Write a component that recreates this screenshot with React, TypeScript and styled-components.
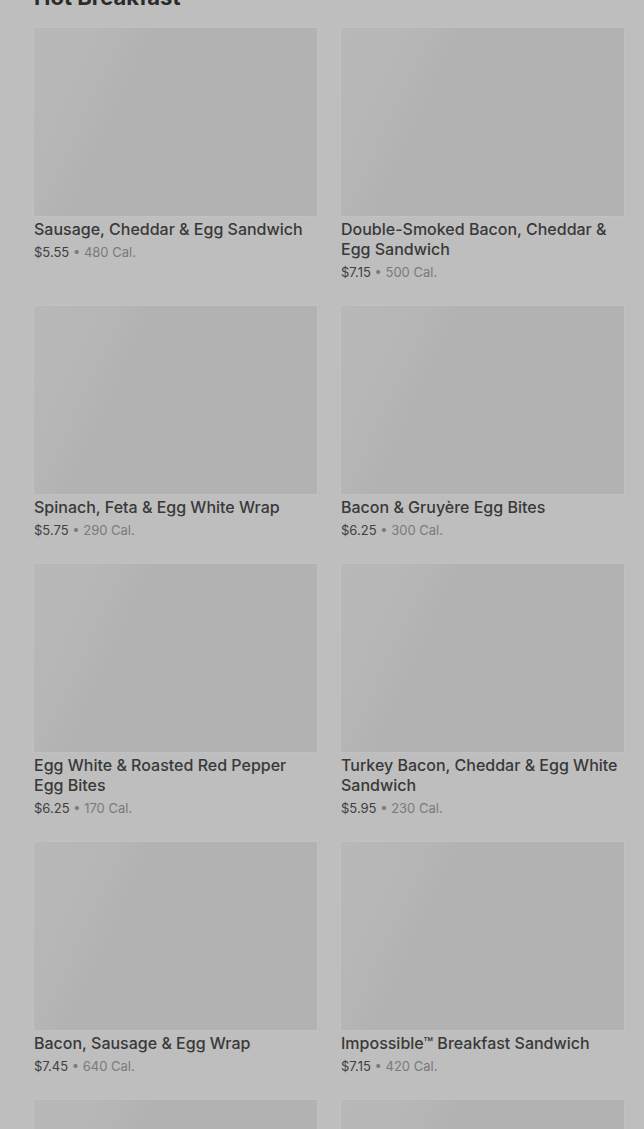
import React from 'react';
import styled, { createGlobalStyle } from 'styled-components';

const GlobalStyle = createGlobalStyle`
  html, body {
    margin: 0;
    padding: 0;
    background: #bebebe;
    font-family: Inter, "Noto Sans", "Liberation Sans", sans-serif;
    overflow: hidden;
  }
`;

const StyledMenu = styled.main`
  padding: 0 20px 0 34px;
  margin-top: -23px;
`;

const Heading = styled.h2`
  margin: 6px 0 17px;
  font-size: 22px;
  line-height: 28px;
  font-weight: 700;
  color: #2b2b2b;
`;

const Grid = styled.div`
  display: grid;
  grid-template-columns: 283px 283px;
  column-gap: 24px;
  row-gap: 25px;
`;

const Card = styled.div`
  display: flex;
  flex-direction: column;
`;

const Thumb = styled.div`
  height: 188px;
  background: linear-gradient(
    115deg,
    #b8b8b8 0%,
    #b6b6b6 22%,
    #b2b2b2 32%,
    #b2b2b2 100%
  );
  box-shadow: 0 0 0 1px #c1c1c1;
`;

const Title = styled.div`
  margin-top: 3px;
  font-size: 16px;
  line-height: 20px;
  font-weight: 500;
  color: #393939;
`;

const Meta = styled.div`
  margin-top: 4px;
  font-size: 13px;
  line-height: 18px;
  color: #404040;
  span {
    color: #7a7a7a;
  }
`;

interface IItem {
  name: string;
  price: string;
  cal: number;
}

const items: IItem[] = [
  { name: 'Sausage, Cheddar & Egg Sandwich', price: '$5.55', cal: 480 },
  { name: 'Double-Smoked Bacon, Cheddar & Egg Sandwich', price: '$7.15', cal: 500 },
  { name: 'Spinach, Feta & Egg White Wrap', price: '$5.75', cal: 290 },
  { name: 'Bacon & Gruyère Egg Bites', price: '$6.25', cal: 300 },
  { name: 'Egg White & Roasted Red Pepper Egg Bites', price: '$6.25', cal: 170 },
  { name: 'Turkey Bacon, Cheddar & Egg White Sandwich', price: '$5.95', cal: 230 },
  { name: 'Bacon, Sausage & Egg Wrap', price: '$7.45', cal: 640 },
  { name: 'Impossible™ Breakfast Sandwich', price: '$7.15', cal: 420 },
  { name: '', price: '', cal: 0 },
  { name: '', price: '', cal: 0 },
];

function App() {
  return (
    <>
      <GlobalStyle />
      <StyledMenu>
        <Heading>Hot Breakfast</Heading>
        <Grid>
          {items.map((item, i) => (
            <Card key={i}>
              <Thumb />
              {item.name ? (
                <>
                  <Title>{item.name}</Title>
                  <Meta>
                    {item.price} <span>• {item.cal} Cal.</span>
                  </Meta>
                </>
              ) : null}
            </Card>
          ))}
        </Grid>
      </StyledMenu>
    </>
  );
}

export default App;
